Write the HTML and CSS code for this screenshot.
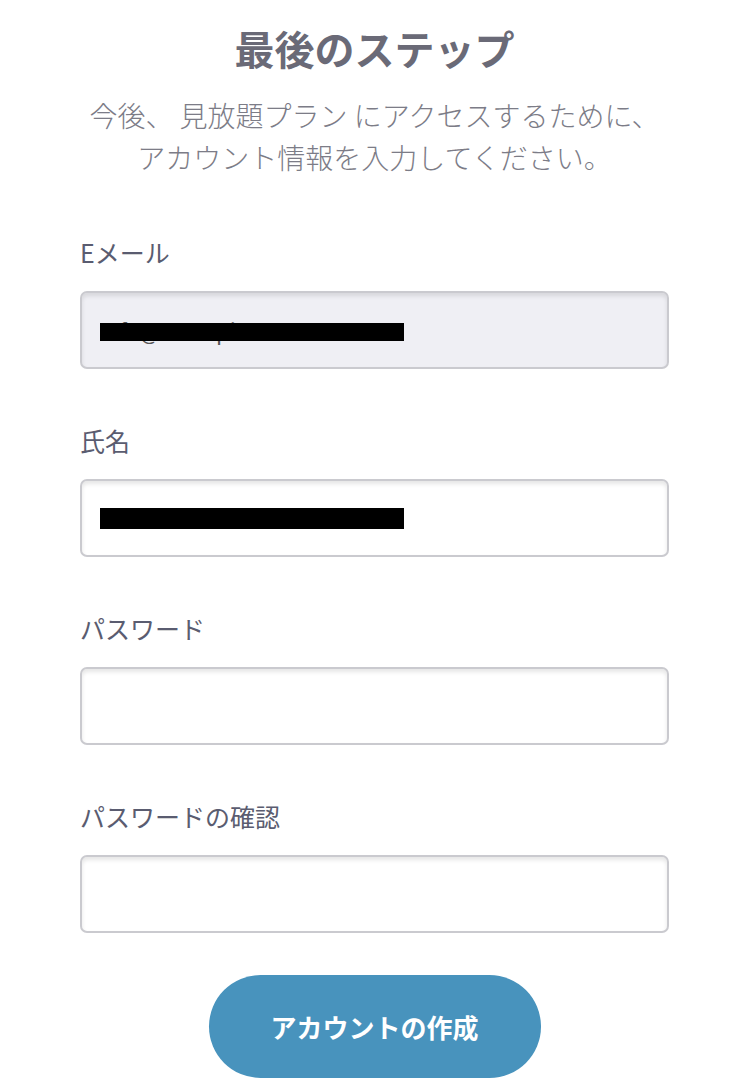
FILE: index.html
```html
<!DOCTYPE html>
<html lang="ja">

<head>
  <meta charset="UTF-8" />
  <meta name="viewport" content="width=device-width, initial-scale=1.0" />
  <link rel="stylesheet" href="styles.css">
  <title>最後のステップ</title>
</head>

<body>
  <main class="page">
    <h1 class="title">最後のステップ</h1>
    <p class="lead">今後、 見放題プラン にアクセスするために、<br>アカウント情報を入力してください。</p>

    <form class="signup">
      <div class="field">
        <label class="label" for="email">Eメール</label>
        <div class="input-wrap">
          <input class="input" id="email" type="email" value="info@example.com" disabled>
          <span class="redact redact-email"></span>
        </div>
      </div>

      <div class="field">
        <label class="label" for="name">氏名</label>
        <div class="input-wrap">
          <input class="input" id="name" type="text" value="">
          <span class="redact redact-name"></span>
        </div>
      </div>

      <div class="field">
        <label class="label" for="password">パスワード</label>
        <div class="input-wrap">
          <input class="input" id="password" type="password">
        </div>
      </div>

      <div class="field">
        <label class="label" for="confirm">パスワードの確認</label>
        <div class="input-wrap">
          <input class="input" id="confirm" type="password">
        </div>
      </div>

      <button class="submit" type="button">アカウントの作成</button>
    </form>
  </main>
</body>

</html>
```

FILE: styles.css
```css
*,
*::after,
*::before {
  box-sizing: border-box;
}

body {
  margin: 0;
  background-color: white;
  font-family: "Noto Sans CJK JP", "Noto Sans", sans-serif;
}

.page {
  padding: 24px 79px 0 80px;
}

.title {
  margin: 0;
  text-align: center;
  font-size: 40px;
  line-height: 48px;
  font-weight: bold;
  color: #6a6a77;
}

.lead {
  margin: 22px 0 0;
  text-align: center;
  font-size: 28px;
  line-height: 42px;
  font-weight: 300;
  color: #7c7c87;
}

.signup {
  display: flex;
  flex-direction: column;
  gap: 53px;
  margin-top: 56px;
}

.field {
  display: flex;
  flex-direction: column;
  gap: 21px;
}

.label {
  font-size: 25px;
  line-height: 36px;
  font-weight: normal;
  color: #5a5c70;
}

.input-wrap {
  position: relative;
}

.input {
  display: block;
  width: 100%;
  height: 78px;
  padding: 0 18px;
  border: 2px solid #cacacf;
  border-radius: 7px;
  background-color: white;
  box-shadow: inset 0 3px 4px rgba(0, 0, 0, 0.1);
  font-family: inherit;
  font-size: 22px;
  color: #333;
  outline: none;
}

.input:disabled {
  background-color: #efeff4;
  color: #555;
}

.redact {
  position: absolute;
  left: 20px;
  width: 304px;
  background-color: black;
}

.redact-email {
  top: 32px;
  height: 18px;
}

.redact-name {
  top: 29px;
  height: 21px;
}

.submit {
  align-self: center;
  width: 332px;
  height: 103px;
  margin-top: -11px;
  border: none;
  border-radius: 52px;
  background-color: #4893bd;
  color: white;
  font-family: inherit;
  font-size: 26px;
  font-weight: bold;
  cursor: pointer;
}
```
